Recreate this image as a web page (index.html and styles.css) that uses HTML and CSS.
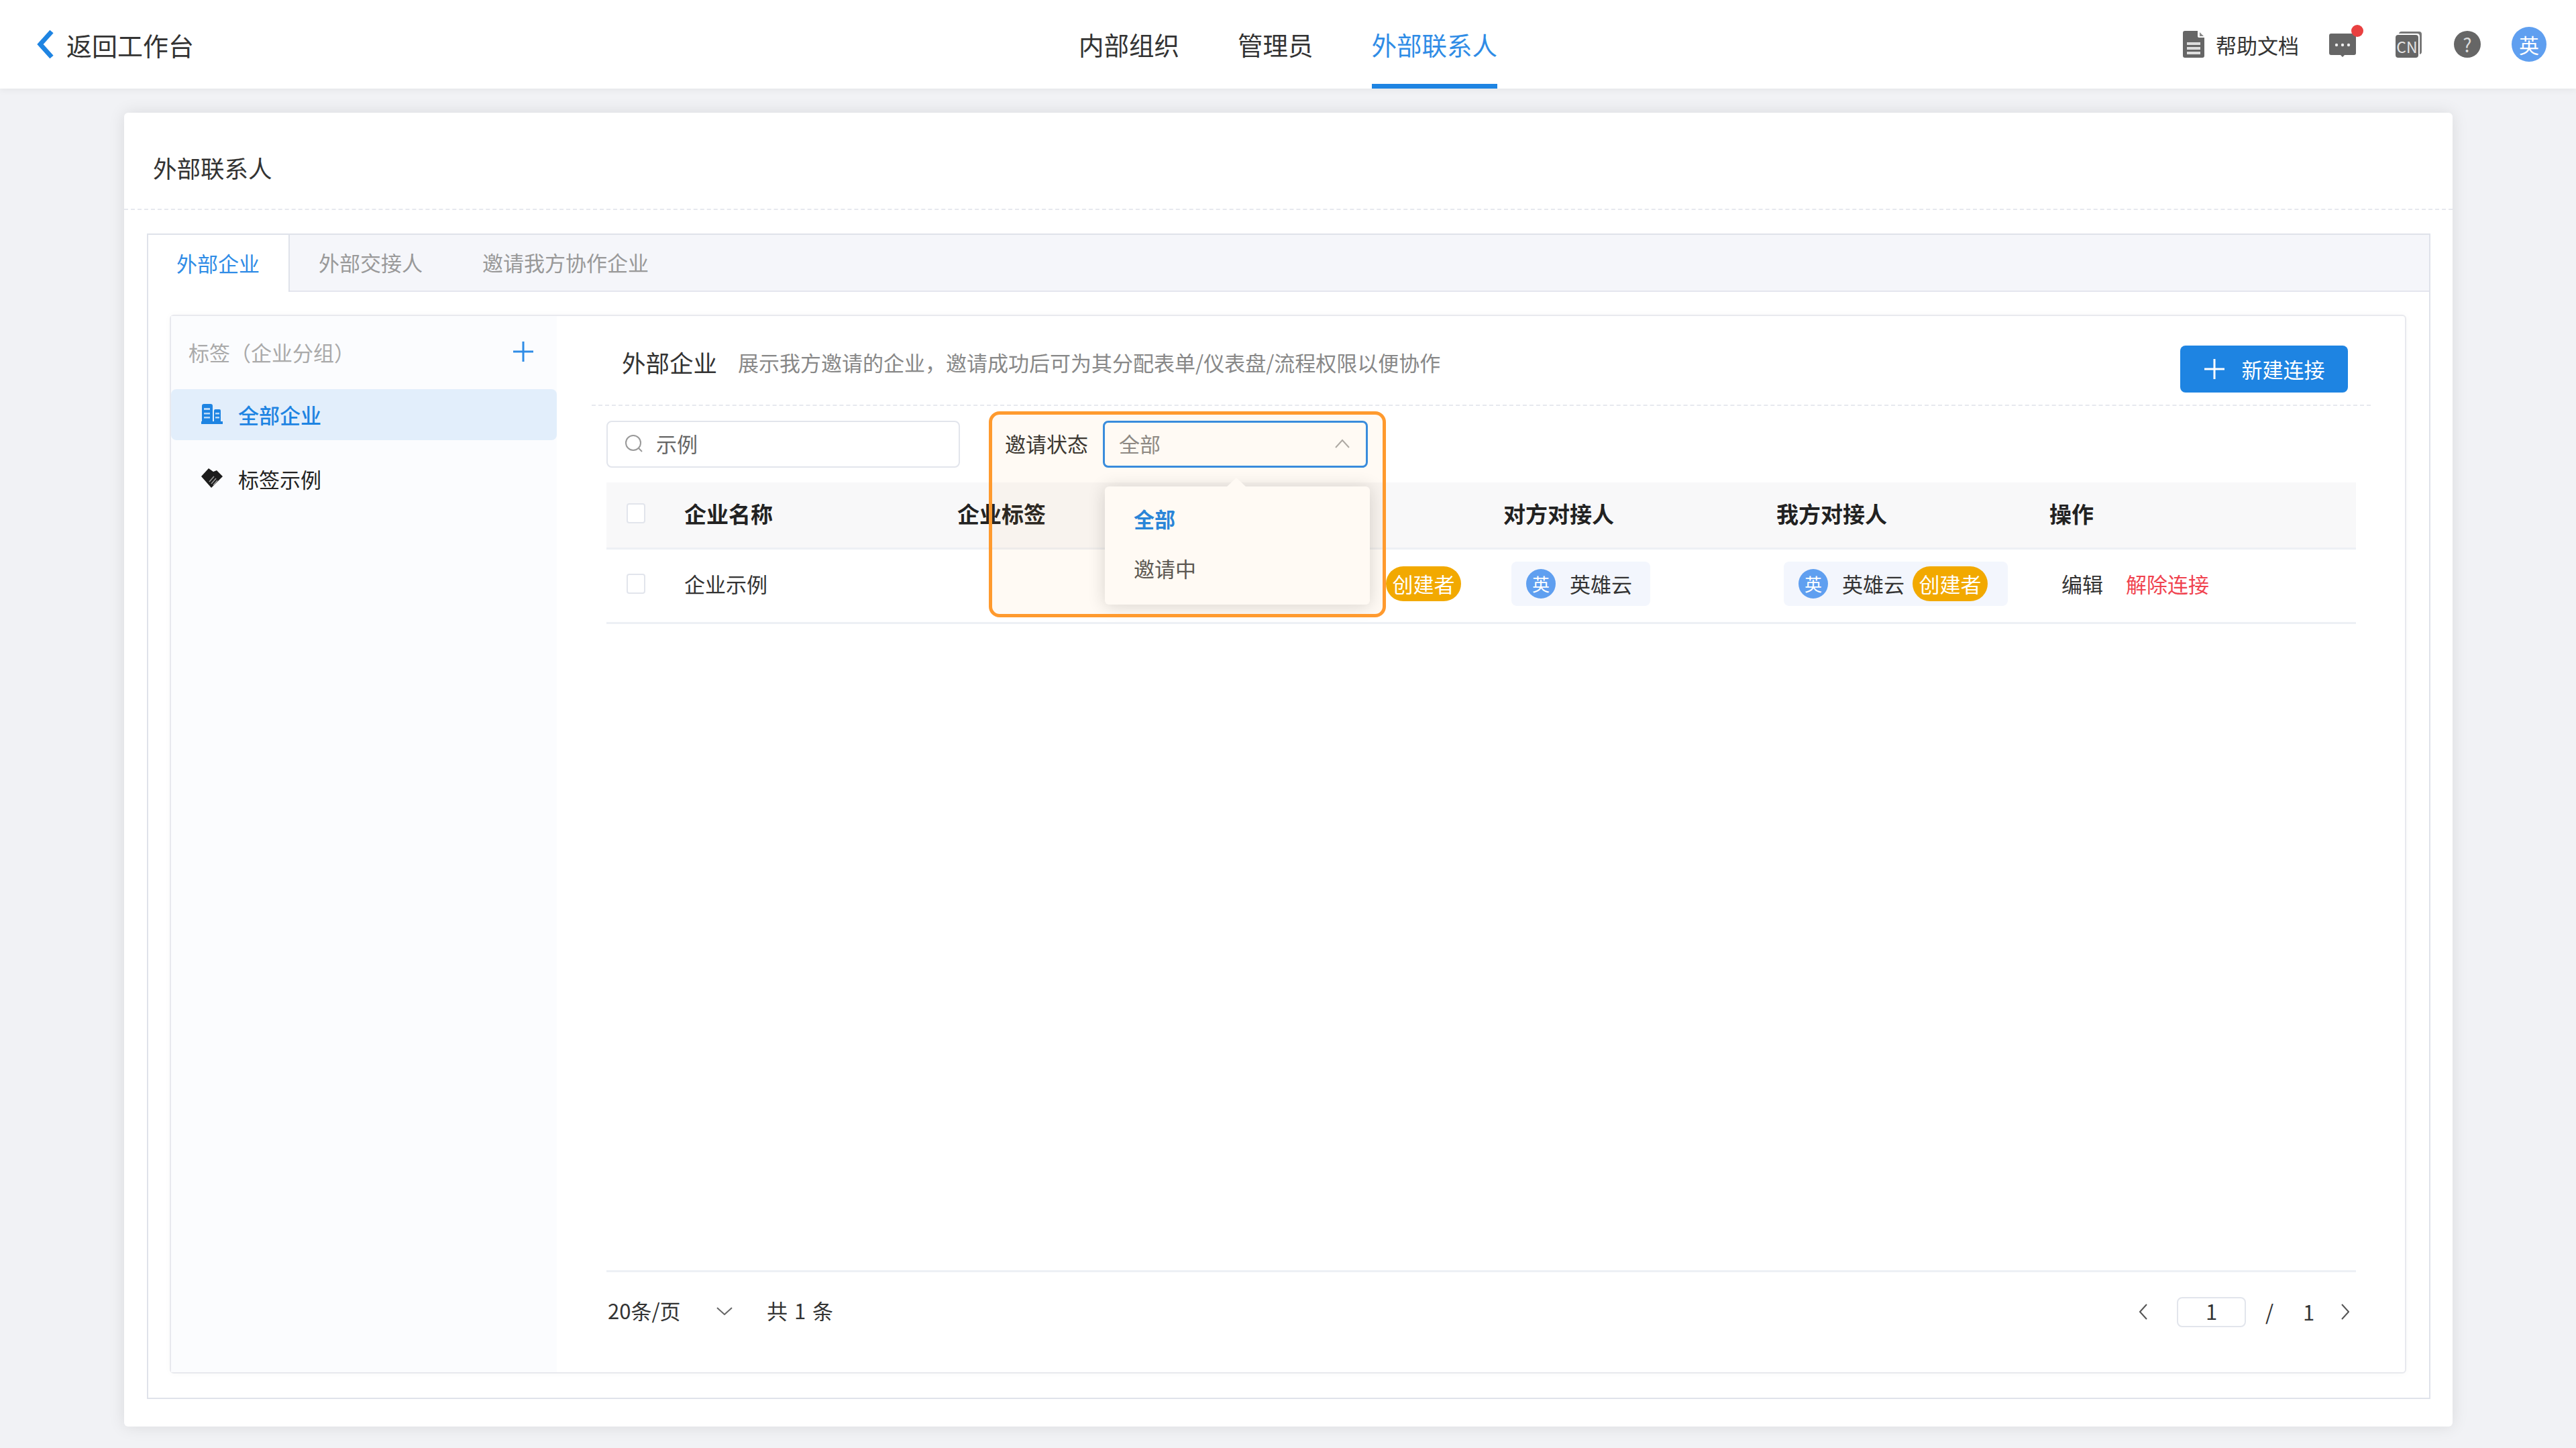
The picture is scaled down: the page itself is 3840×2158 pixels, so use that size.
FILE: index.html
```html
<!DOCTYPE html>
<html lang="zh-CN">
<head>
    <meta charset="UTF-8">
    <title>外部联系人</title>
    <link rel="stylesheet" href="styles.css">
</head>
<body>
    <!-- Top bar -->
    <header class="topbar">
        <a class="back-link">
            <svg class="back-icon" viewBox="0 0 28 46"><path d="M23 4 6 23l17 19"/></svg>
            <span>返回工作台</span>
        </a>
        <nav class="topnav">
            <a>内部组织</a>
            <a>管理员</a>
            <a class="active">外部联系人</a>
        </nav>
        <div class="top-tools">
            <a class="help-link">
                <svg class="doc-icon" viewBox="0 0 32 40"><path d="M3 0h19v8a2 2 0 0 0 2 2h8v27a3 3 0 0 1-3 3H3a3 3 0 0 1-3-3V3a3 3 0 0 1 3-3z" fill="#666"/><path d="M25 2l6 6h-6z" fill="#888"/><path d="M6 17h20v4H6zM6 24h20v4H6zM6 31h20v4H6z" fill="#ddd"/></svg>
                <span>帮助文档</span>
            </a>
            <span class="msg-tool">
                <svg class="msg-icon" viewBox="0 0 40 35"><path d="M3 0h34a3 3 0 0 1 3 3v26a3 3 0 0 1-3 3H23l-3 3-3-3H3a3 3 0 0 1-3-3V3a3 3 0 0 1 3-3z" fill="#666"/><circle cx="11" cy="17" r="2.2" fill="#eee"/><circle cx="20" cy="17" r="2.2" fill="#eee"/><circle cx="29" cy="17" r="2.2" fill="#eee"/></svg>
                <i class="red-dot"></i>
            </span>
            <span class="cn-tool">CN</span>
            <span class="help-tool">?</span>
            <span class="avatar avatar-top">英</span>
        </div>
    </header>

    <main class="page">
        <section class="card">
            <h1 class="card-title">外部联系人</h1>

            <div class="tabs-box">
                <div class="tabs">
                    <a class="tab active">外部企业</a>
                    <a class="tab">外部交接人</a>
                    <a class="tab">邀请我方协作企业</a>
                </div>

                <div class="panel">
                    <!-- Tag list -->
                    <aside class="sidebar">
                        <div class="side-head">
                            <span>标签（企业分组）</span>
                            <svg class="side-plus" viewBox="0 0 32 32"><path d="M16 1v30M1 16h30"/></svg>
                        </div>
                        <a class="side-item active">
                            <svg class="side-icon" viewBox="0 0 32 30"><path d="M1 3a3 3 0 0 1 3-3h10a3 3 0 0 1 3 3v24H1zM19 10a2 2 0 0 1 2-2h6a2 2 0 0 1 2 2v17H19zM0 26h32v4H0z" fill="#1e84e2"/><path d="M4 6h9v3H4zM4 13h9v2.500H4zM4 19h9v2.500H4zM21 13h6v2.500h-6zM21 19h6v2.500h-6z" fill="#b9d8f6"/></svg>
                            <span>全部企业</span>
                        </a>
                        <a class="side-item">
                            <svg class="side-icon" viewBox="0 0 32 30"><path d="M11 0l7 5 5-2 9 9-17 17L0 12z" fill="#1c1c1c"/><path d="M12 20l7-8M15 23l7-8M18 25l6-7" stroke="#999" stroke-width="1.600"/></svg>
                            <span>标签示例</span>
                        </a>
                    </aside>

                    <div class="content">
                        <div class="content-head">
                            <h2>外部企业</h2>
                            <p>展示我方邀请的企业，邀请成功后可为其分配表单/仪表盘/流程权限以便协作</p>
                            <button class="btn-new">
                                <svg viewBox="0 0 32 32"><path d="M16 1v30M1 16h30"/></svg>
                                <span>新建连接</span>
                            </button>
                        </div>

                        <div class="filters">
                            <div class="search">
                                <svg viewBox="0 0 28 28"><circle cx="13" cy="13" r="11"/><path d="M21 21l5 5"/></svg>
                                <span>示例</span>
                            </div>
                            <label class="filter-label">邀请状态</label>
                            <div class="select">
                                <span>全部</span>
                                <svg viewBox="0 0 22 14"><path d="M1 13 11 2l10 11"/></svg>
                                <div class="dropdown">
                                    <i class="dropdown-arrow"></i>
                                    <a class="option selected">全部</a>
                                    <a class="option">邀请中</a>
                                </div>
                            </div>
                            <div class="highlight"></div>
                        </div>

                        <div class="table-wrap">
                            <table class="grid">
                                <colgroup>
                                    <col class="col-check">
                                    <col class="col-data" span="6">
                                    <col>
                                </colgroup>
                                <thead>
                                    <tr>
                                        <th><i class="checkbox"></i></th>
                                        <th>企业名称</th>
                                        <th>企业标签</th>
                                        <th></th>
                                        <th>对方对接人</th>
                                        <th>我方对接人</th>
                                        <th>操作</th>
                                        <th></th>
                                    </tr>
                                </thead>
                                <tbody>
                                    <tr>
                                        <td><i class="checkbox"></i></td>
                                        <td>企业示例</td>
                                        <td></td>
                                        <td class="creator-cell"><span class="tag">创建者</span></td>
                                        <td>
                                            <span class="person person-a"><span class="avatar">英</span><span>英雄云</span></span>
                                        </td>
                                        <td>
                                            <span class="person person-b"><span class="avatar">英</span><span>英雄云</span><span class="tag">创建者</span></span>
                                        </td>
                                        <td class="actions"><a>编辑</a><a class="danger">解除连接</a></td>
                                        <td></td>
                                    </tr>
                                </tbody>
                            </table>
                        </div>

                        <div class="pager">
                            <span class="page-size">20条/页</span>
                            <svg class="pager-down" viewBox="0 0 24 12"><path d="M1 1l11 10L23 1"/></svg>
                            <span class="total">共 1 条</span>
                            <div class="pager-right">
                                <svg class="pager-arrow" viewBox="0 0 12 24"><path d="M11 1 1 12l10 11"/></svg>
                                <span class="page-input">1</span>
                                <span class="page-sep">/</span>
                                <span class="page-count">1</span>
                                <svg class="pager-arrow" viewBox="0 0 12 24"><path d="M1 1l10 11L1 23"/></svg>
                            </div>
                        </div>
                    </div>
                </div>
            </div>
        </section>
    </main>
</body>
</html>
```

FILE: styles.css
```css
/* Basic Reset */
* {
    margin: 0;
    padding: 0;
    box-sizing: border-box;
}

body {
    height: 2158px;
    display: flex;
    flex-direction: column;
    overflow: hidden;
    font-family: "Noto Sans CJK SC", "Noto Sans", sans-serif;
    font-size: 31px;
    color: #333;
    background-color: #f1f2f5;
}

svg {
    display: block;
    flex: none;
    fill: none;
}

/* Top bar */
.topbar {
    position: relative;
    z-index: 2;
    flex: none;
    height: 132px;
    display: flex;
    align-items: center;
    background-color: #fff;
    box-shadow: 0 2px 10px rgba(0, 0, 0, 0.06);
}

.back-link {
    width: 1608px;
    flex: none;
    display: flex;
    align-items: center;
    padding-left: 54px;
    font-size: 38px;
}

.back-icon {
    width: 28px;
    height: 46px;
    margin-right: 17px;
    stroke: #1e84e2;
    stroke-width: 7;
}

.topnav {
    display: flex;
    height: 100%;
    gap: 87px;
    font-size: 37.500px;
}

.topnav a {
    display: flex;
    align-items: center;
    border-bottom: 7px solid transparent;
    padding-top: 5px;
}

.topnav a.active {
    color: #2f8ce6;
    border-bottom-color: #1e84e2;
}

.top-tools {
    display: flex;
    align-items: center;
    margin-left: auto;
    padding-right: 44px;
}

.help-link {
    display: flex;
    align-items: center;
    gap: 17px;
}

.doc-icon {
    width: 32px;
    height: 40px;
}

.msg-tool {
    position: relative;
    margin-left: 45px;
    margin-top: 2px;
}

.msg-icon {
    width: 40px;
    height: 35px;
}

.red-dot {
    position: absolute;
    top: -13px;
    right: -11px;
    width: 18px;
    height: 18px;
    border-radius: 50%;
    background-color: #e94040;
}

.cn-tool {
    width: 34px;
    height: 34px;
    margin: 6px 5px 0 59px;
    display: flex;
    align-items: center;
    justify-content: center;
    border-radius: 4px;
    background-color: #666;
    box-shadow: 2px -2px 0 0 #fff, 5px -5px 0 0 #777;
    color: #e4e4e4;
    font-size: 23px;
    line-height: 1;
}

.help-tool {
    width: 40px;
    height: 40px;
    margin-left: 48px;
    display: flex;
    align-items: center;
    justify-content: center;
    border-radius: 50%;
    background-color: #666;
    color: #ddd;
    font-size: 28px;
    line-height: 1;
}

.avatar {
    width: 44px;
    height: 44px;
    flex: none;
    display: flex;
    align-items: center;
    justify-content: center;
    border-radius: 50%;
    background-color: #5f9ff0;
    color: #fff;
    font-size: 26px;
    line-height: 1;
}

.avatar-top {
    width: 52px;
    height: 52px;
    margin-left: 46px;
    font-size: 30px;
}

/* Card */
.page {
    flex: 1;
    min-height: 0;
    display: flex;
    padding: 36px 184px 32px 185px;
}

.card {
    flex: 1;
    min-width: 0;
    display: flex;
    flex-direction: column;
    border-radius: 6px;
    background-color: #fff;
    box-shadow: 0 0 24px rgba(0, 0, 0, 0.1);
}

.card-title {
    flex: none;
    height: 145px;
    padding: 59px 0 0 43px;
    border-bottom: 2px dashed #e6e8ee;
    font-size: 35.500px;
    font-weight: 400;
    line-height: 46px;
}

.tabs-box {
    flex: 1;
    min-height: 0;
    display: flex;
    flex-direction: column;
    margin: 35px 33px 41px 34px;
    border: 2px solid #dfe2ea;
}

/* Tabs */
.tabs {
    flex: none;
    height: 85px;
    display: flex;
    background-color: #f5f6fa;
    border-bottom: 2px solid #e4e6ee;
    color: #999;
    white-space: nowrap;
}

.tab {
    display: flex;
    align-items: center;
    padding: 0 44px 3px 45px;
}

.tab.active {
    width: 211px;
    height: 85px;
    margin-right: -2px;
    padding: 0 0 3px 42px;
    background-color: #fff;
    border-right: 2px solid #dfe2ea;
    color: #2f8ce6;
}

/* Panel */
.panel {
    flex: 1;
    min-height: 0;
    display: flex;
    margin: 34px 34px 36px 32px;
    border: 2px solid #e8e9ee;
    border-radius: 6px;
    box-shadow: 0 0 10px rgba(0, 0, 0, 0.03);
}

.sidebar {
    flex: none;
    width: 575px;
    background-color: #fbfcfe;
}

.side-head {
    height: 109px;
    display: flex;
    align-items: center;
    justify-content: space-between;
    padding: 0 34px 3px 26px;
    color: #aaa;
}

.side-plus {
    width: 32px;
    height: 32px;
    stroke: #2f8ce6;
    stroke-width: 3;
}

.side-item {
    height: 76px;
    display: flex;
    align-items: center;
    gap: 23px;
    padding: 0 0 2px 45px;
    color: #222;
}

.side-item + .side-item {
    margin-top: 20px;
}

.side-item.active {
    border-radius: 8px;
    background-color: #e2eefb;
    color: #1e84e2;
    font-weight: 500;
}

.side-icon {
    width: 32px;
    height: 30px;
}

/* Right side */
.content {
    flex: 1;
    min-width: 0;
    display: flex;
    flex-direction: column;
    padding: 0 73px 0 74px;
}

.content-head {
    flex: none;
    height: 134px;
    display: flex;
    align-items: center;
    margin: 0 -22px;
    padding: 4px 34px 0 45px;
    border-bottom: 2px dashed #e6e8ee;
}

.content-head h2 {
    font-size: 35.500px;
    font-weight: 400;
    margin-right: 31px;
}

.content-head p {
    color: #888;
}

.btn-new {
    width: 250px;
    height: 70px;
    margin-left: auto;
    margin-top: 21px;
    display: flex;
    align-items: center;
    justify-content: center;
    gap: 25px;
    border: none;
    border-radius: 8px;
    background-color: #1e84e2;
    color: #fff;
    font: inherit;
}

.btn-new svg {
    width: 32px;
    height: 32px;
    stroke: #fff;
    stroke-width: 3;
}

/* Filter row */
.filters {
    position: relative;
    z-index: 1;
    flex: none;
    height: 70px;
    display: flex;
    align-items: center;
    margin-top: 22px;
}

.search {
    width: 527px;
    height: 70px;
    display: flex;
    align-items: center;
    gap: 19px;
    padding: 0 0 3px 25px;
    border: 2px solid #e2e5ec;
    border-radius: 8px;
    color: #666;
}

.search svg {
    width: 28px;
    height: 28px;
    stroke: #999;
    stroke-width: 2;
}

.filter-label {
    margin-left: 67px;
    width: 146px;
    padding-bottom: 3px;
}

.select {
    position: relative;
    width: 395px;
    height: 70px;
    display: flex;
    align-items: center;
    justify-content: space-between;
    padding: 0 24px 3px 21px;
    border: 3px solid #2f8ce6;
    border-radius: 8px;
    background-color: #fff;
    color: #888;
}

.select > svg {
    width: 22px;
    height: 14px;
    stroke: #aaa;
    stroke-width: 2;
}

.dropdown {
    position: absolute;
    top: 95px;
    left: 0;
    width: 395px;
    height: 176px;
    padding-top: 10px;
    border-radius: 6px;
    background-color: #fff;
    box-shadow: 0 2px 26px rgba(0, 0, 0, 0.16);
}

.dropdown-arrow {
    position: absolute;
    top: -13px;
    left: 181px;
    width: 30px;
    height: 14px;
    background-color: #fff;
    clip-path: polygon(50% 0, 100% 100%, 0 100%);
}

.option {
    height: 74px;
    display: flex;
    align-items: center;
    padding-left: 43px;
    color: #555;
}

.option.selected {
    color: #1e84e2;
    font-weight: 700;
}

.highlight {
    position: absolute;
    top: -14px;
    left: 570px;
    width: 592px;
    height: 307px;
    border: 5px solid #ff9a2e;
    border-radius: 16px;
    background-color: rgba(255, 150, 40, 0.05);
    pointer-events: none;
}

/* Table */
.table-wrap {
    flex: 1;
    min-height: 0;
    margin-top: 22px;
}

.grid {
    width: 100%;
    table-layout: fixed;
    border-collapse: collapse;
}

.col-check {
    width: 116px;
}

.col-data {
    width: 407px;
}

.grid th,
.grid td {
    text-align: left;
    vertical-align: middle;
    font-weight: 400;
    padding-bottom: 4px;
}

.grid th {
    height: 98px;
    background-color: #f8f8f9;
    border-bottom: 3px solid #edf0f5;
    color: #222;
    font-size: 33px;
    font-weight: 700;
}

.grid td {
    height: 111px;
    padding-bottom: 6px;
    border-bottom: 3px solid #edf0f5;
}

.grid th:first-child,
.grid td:first-child {
    padding-left: 30px;
}

.checkbox {
    display: block;
    width: 28px;
    height: 30px;
    border: 2px solid #e2e5ec;
    border-radius: 4px;
    background-color: #fff;
}

.tag {
    width: 112px;
    height: 52px;
    flex: none;
    display: inline-flex;
    align-items: center;
    justify-content: center;
    border-radius: 26px;
    background-color: #f2a900;
    color: #fff;
}

.grid .creator-cell {
    padding-left: 232px;
}

.person {
    height: 66px;
    display: inline-flex;
    align-items: center;
    gap: 21px;
    padding-left: 22px;
    border-radius: 8px;
    background-color: #f3f6fd;
    vertical-align: middle;
}

.person-a {
    width: 207px;
    margin-left: 12px;
}

.person-b {
    width: 334px;
    margin-left: 11px;
}

.person-b .tag {
    margin-left: -9px;
}

.grid .actions {
    padding-left: 18px;
}

.actions a + a {
    margin-left: 34px;
}

.danger {
    color: #f0434f;
}

/* Pagination */
.pager {
    flex: none;
    height: 152px;
    display: flex;
    align-items: flex-start;
    padding-top: 36px;
    border-top: 3px solid #edf0f5;
    line-height: 42px;
    white-space: nowrap;
}

.page-size {
    margin-left: 2px;
    width: 162px;
}

.pager-down {
    width: 24px;
    height: 12px;
    margin-top: 16px;
    stroke: #666;
    stroke-width: 2;
}

.total {
    margin-left: 51px;
    word-spacing: 3px;
}

.pager-right {
    display: flex;
    align-items: center;
    height: 42px;
    margin: 2px 0 0 auto;
    padding-right: 10px;
}

.pager-arrow {
    width: 12px;
    height: 24px;
    stroke: #555;
    stroke-width: 2;
}

.page-input {
    width: 103px;
    height: 45px;
    margin-left: 44px;
    padding-bottom: 3px;
    display: flex;
    align-items: center;
    justify-content: center;
    border: 2px solid #e2e5ec;
    border-radius: 8px;
}

.page-sep {
    margin-left: 29px;
    width: 16px;
}

.page-count {
    margin-left: 40px;
    width: 17px;
    margin-right: 40px;
}
```
